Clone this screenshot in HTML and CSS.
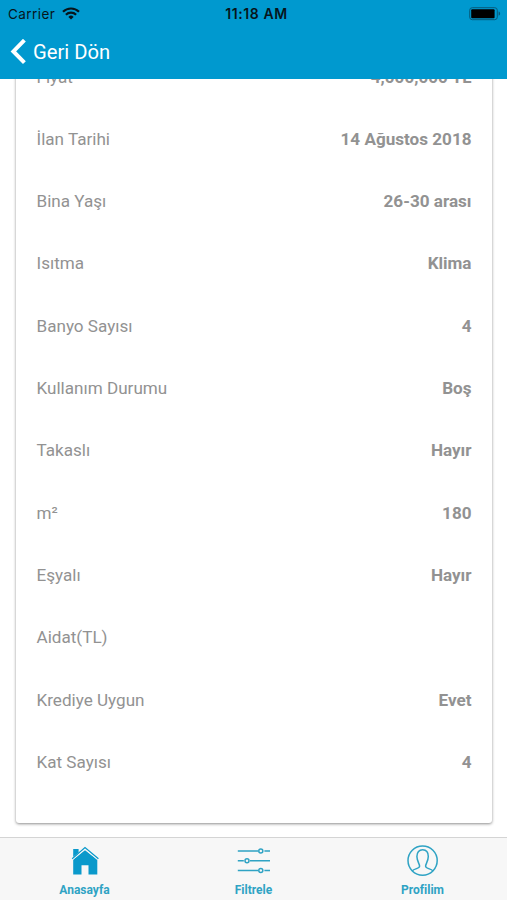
FILE: index.html
```html
<!DOCTYPE html>
<html lang="tr">
<head>
  <meta charset="UTF-8">
  <meta name="viewport" content="width=device-width, initial-scale=1.0">
  <title>İlan Detayı</title>
  <link rel="stylesheet" href="styles.css">
</head>
<body>
  <div class="app">
    <!-- Header -->
    <header class="header">
      <div class="status-bar">
        <div class="carrier">
          <span>Carrier</span>
          <svg width="18" height="13" viewBox="0 0 18 13" fill="none" stroke="#07151c" stroke-width="2.2">
            <path d="M1 4.8a11.3 11.3 0 0 1 16 0"/>
            <path d="M3.9 7.8a7.2 7.2 0 0 1 10.2 0"/>
            <path d="M9 12.6l-2.6-2.7a3.7 3.7 0 0 1 5.2 0z" fill="#07151c" stroke="none"/>
          </svg>
        </div>
        <div class="time">11:18 AM</div>
        <div class="battery">
          <svg width="32" height="14" viewBox="0 0 32 14">
            <rect x="0.7" y="0.7" width="27.6" height="12" rx="2.6" fill="none" stroke="#075a7a" stroke-width="1"/>
            <rect x="2.2" y="2.2" width="23.4" height="9" rx="1" fill="#000"/>
            <path d="M29.6 4.6c2 .6 2 3.6 0 4.2z" fill="#075a7a"/>
          </svg>
        </div>
      </div>
      <a class="back" href="#">
        <svg width="16" height="26" viewBox="0 0 16 26" fill="none" stroke="#fff" stroke-width="4">
          <path d="M14.4 1.2L3.4 12.4l11 11.2"/>
        </svg>
        <span>Geri Dön</span>
      </a>
    </header>

    <!-- Details -->
    <main class="content">
      <div class="card">
        <div class="row"><span class="label">Fiyat</span><span class="value">4,000,000 TL</span></div>
        <div class="row"><span class="label">İlan Tarihi</span><span class="value">14 Ağustos 2018</span></div>
        <div class="row"><span class="label">Bina Yaşı</span><span class="value">26-30 arası</span></div>
        <div class="row"><span class="label">Isıtma</span><span class="value">Klima</span></div>
        <div class="row"><span class="label">Banyo Sayısı</span><span class="value">4</span></div>
        <div class="row"><span class="label">Kullanım Durumu</span><span class="value">Boş</span></div>
        <div class="row"><span class="label">Takaslı</span><span class="value">Hayır</span></div>
        <div class="row"><span class="label">m²</span><span class="value">180</span></div>
        <div class="row"><span class="label">Eşyalı</span><span class="value">Hayır</span></div>
        <div class="row"><span class="label">Aidat(TL)</span><span class="value"></span></div>
        <div class="row"><span class="label">Krediye Uygun</span><span class="value">Evet</span></div>
        <div class="row"><span class="label">Kat Sayısı</span><span class="value">4</span></div>
      </div>
    </main>

    <!-- Tab Bar -->
    <nav class="tabs">
      <a class="tab" href="#">
        <svg width="34" height="32" viewBox="0 0 34 32" fill="#0a99cb">
          <path d="M5.2 4h5.4v3.4L5.2 12z"/>
          <path d="M17 5.2l12.3 9.6v14.8h-8.8v-9.4h-7v9.4H5.2v-15z"/>
          <path d="M4.2 13.8L17 2.6l13.4 11.2" fill="none" stroke="#0a99cb" stroke-width="1.3"/>
          <path d="M4.8 14.8L17 4.2l12.6 10.6" fill="none" stroke="#f7f7f7" stroke-width="0.7"/>
        </svg>
        <span>Anasayfa</span>
      </a>
      <a class="tab" href="#">
        <svg width="34" height="32" viewBox="0 0 34 32" fill="none" stroke="#2fa3c4" stroke-width="1.5">
          <path d="M.8 6h20.4M27.4 6H33M.8 15.8h6M13 15.8h20M.8 25.6h20.4M27.4 25.6H33"/>
          <circle cx="23.8" cy="6" r="2"/>
          <circle cx="10" cy="15.8" r="2"/>
          <circle cx="23.8" cy="25.6" r="2"/>
        </svg>
        <span>Filtrele</span>
      </a>
      <a class="tab" href="#">
        <svg width="34" height="32" viewBox="0 0 34 32" fill="none" stroke="#2fa3c4" stroke-width="1.5">
          <circle cx="16.6" cy="15.6" r="14.6"/>
          <path d="M6.4 26c.8-2.4 7-2 7.2-4.8.2-2-2.7-5-2.7-9.6 0-4.3 2.3-6.8 5.7-6.8s5.7 2.5 5.7 6.8c0 4.6-2.9 7.600-2.700 9.600.2 2.800 6.400 2.400 7.200 4.800"/>
        </svg>
        <span>Profilim</span>
      </a>
    </nav>
  </div>
</body>
</html>
```
FILE: styles.css
```css
/* General Styling */
* {
  box-sizing: border-box;
}

body {
  margin: 0;
  font-family: Roboto, sans-serif;
  background-color: #ffffff;
}

a {
  text-decoration: none;
}

svg {
  display: block;
}

.app {
  display: flex;
  flex-direction: column;
  height: 900px;
  overflow: hidden;
}

/* Header */
.header {
  height: 79px;
  flex-shrink: 0;
  background-color: #0099cf;
}

.status-bar {
  display: grid;
  grid-template-columns: 1fr auto 1fr;
  align-items: center;
  height: 27px;
  padding: 0 6px 0 8px;
  font-family: Inter, sans-serif;
  font-size: 13.5px;
  color: #07151c;
}

.carrier {
  display: flex;
  align-items: center;
  gap: 7px;
  letter-spacing: 0.45px;
}

.time {
  padding-left: 4px;
  font-size: 14px;
  font-weight: 600;
  letter-spacing: 0.6px;
}

.battery {
  justify-self: end;
}

.back {
  display: flex;
  align-items: center;
  gap: 7px;
  height: 49px;
  padding-left: 10px;
  color: #ffffff;
  font-size: 20.2px;
}

/* Detail Card */
.content {
  display: flex;
  flex: 1;
  flex-direction: column;
  justify-content: flex-end;
  min-height: 0;
  padding: 0 15px 14px 16px;
  overflow: hidden;
}

.card {
  padding: 0 20.5px 30px;
  background-color: #ffffff;
  border-radius: 3px;
  box-shadow: 0 1px 3px rgba(0, 0, 0, 0.45);
}

.row {
  display: flex;
  justify-content: space-between;
  align-items: center;
  height: 62.3px;
  font-size: 17.1px;
  color: #929292;
}

.value {
  font-weight: bold;
}

/* Tab Bar */
.tabs {
  display: flex;
  flex-shrink: 0;
  height: 63px;
  background-color: #f7f7f7;
  border-top: 1px solid #d4d4d4;
}

.tab {
  display: flex;
  flex: 1;
  flex-direction: column;
  align-items: center;
  gap: 6px;
  padding-top: 7px;
  font-size: 12px;
  font-weight: bold;
  line-height: 14px;
  color: #2fa3c4;
}
```
